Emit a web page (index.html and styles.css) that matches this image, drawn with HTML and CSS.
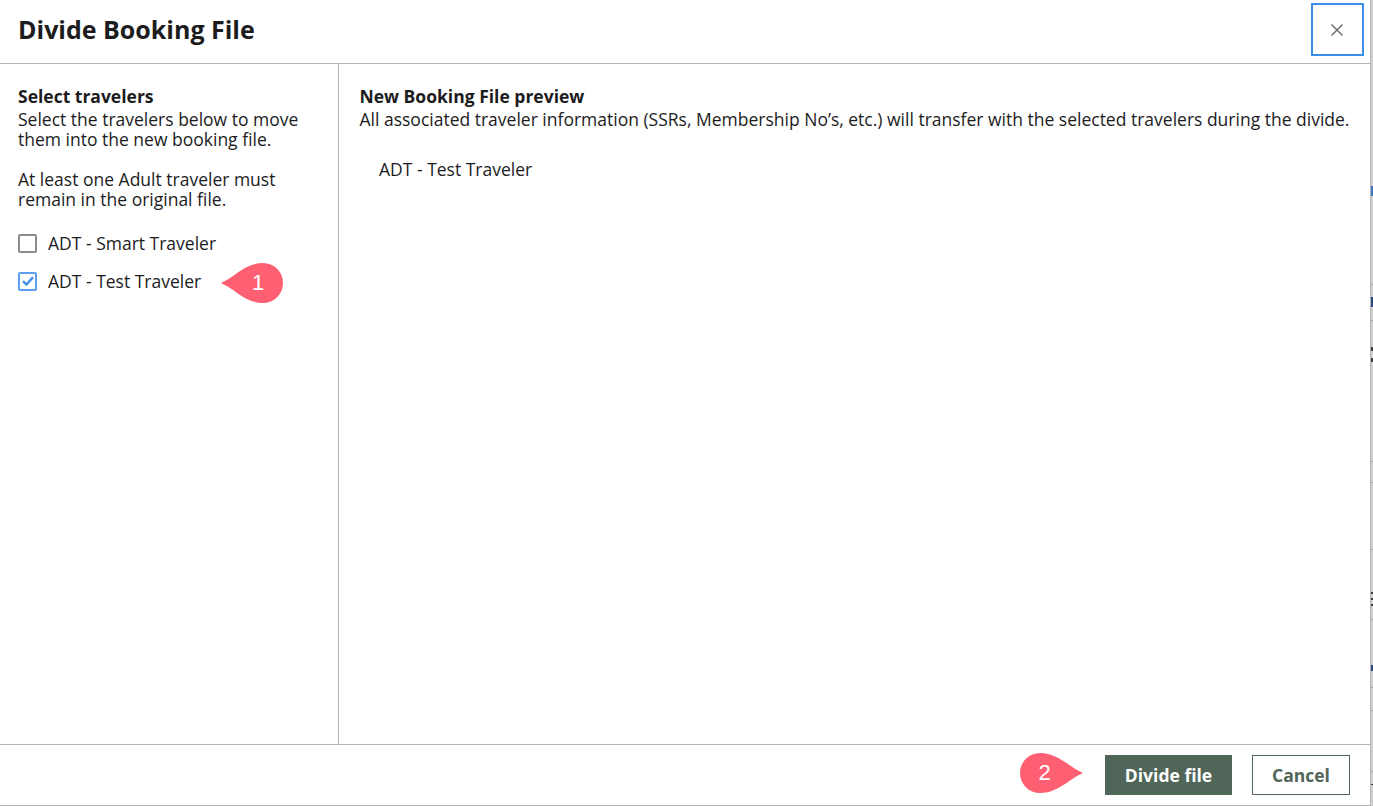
FILE: index.html
```html
<!DOCTYPE html>
<html lang="en">
<head>
<meta charset="utf-8">
<title>Divide Booking File</title>
<link rel="stylesheet" href="styles.css">
</head>
<body>
<div class="page">
  <main class="dialog">
    <header class="head">
      <h1 class="title">Divide Booking File</h1>
      <button class="close" aria-label="Close">
        <svg width="14" height="14" viewBox="0 0 14 14"><path d="M1.5 1.5 12.5 12.5M12.5 1.5 1.5 12.5" stroke="#6b6f76" stroke-width="1.5" fill="none"/></svg>
      </button>
    </header>
    <div class="body">
      <section class="left">
        <h2 class="sub">Select travelers</h2>
        <p class="text">Select the travelers below to move them into the new booking file.</p>
        <p class="text gap">At least one Adult traveler must remain in the original file.</p>
        <div class="options">
          <label class="option">
            <span class="box"></span>
            <span>ADT - Smart Traveler</span>
          </label>
          <label class="option">
            <span class="box on">
              <svg width="14" height="12" viewBox="0 0 14 12"><path d="M2 6.2 5.4 9.6 12 2.2" stroke="#3b8fe8" stroke-width="2.4" fill="none"/></svg>
            </span>
            <span>ADT - Test Traveler</span>
            <span class="pin pin-left">
              <svg class="drop" width="63" height="40" viewBox="0 0 63 40"><path d="M0 20C14 14 24 0 42 0A20 20 0 0 1 42 40C24 40 14 26 0 20Z" fill="#ff5f73"/></svg>
              <span class="num">1</span>
            </span>
          </label>
        </div>
      </section>
      <section class="right">
        <h2 class="sub">New Booking File preview</h2>
        <p class="text">All associated traveler information (SSRs, Membership No’s, etc.) will transfer with the selected travelers during the divide.</p>
        <p class="traveler">ADT - Test Traveler</p>
      </section>
    </div>
    <footer class="foot">
      <span class="pin pin-right">
        <svg class="drop" width="63" height="40" viewBox="0 0 63 40"><path d="M63 20C49 14 38 0 20 0A20 20 0 0 0 20 40C38 40 49 26 63 20Z" fill="#ff5f73"/></svg>
        <span class="num">2</span>
      </span>
      <button class="btn primary">Divide file</button>
      <button class="btn ghost">Cancel</button>
    </footer>
  </main>
  <aside class="strip">
    <i class="bit blue" style="top:186px;height:10px"></i>
    <i class="bit line" style="top:284px"></i>
    <i class="bit navy" style="top:297px;height:10px"></i>
    <i class="bit line" style="top:320px"></i>
    <i class="bit dark" style="top:347px;height:4px"></i>
    <i class="bit dark" style="top:358px;height:4px"></i>
    <i class="bit line" style="top:461px"></i>
    <i class="bit line" style="top:482px"></i>
    <i class="bit line" style="top:549px"></i>
    <i class="bit dark" style="top:592px;height:2px"></i>
    <i class="bit dark" style="top:598px;height:2px"></i>
    <i class="bit dark" style="top:604px;height:2px"></i>
    <i class="bit line" style="top:619px"></i>
    <i class="bit navy" style="top:665px;height:6px"></i>
    <i class="bit line" style="top:687px"></i>
    <i class="bit line" style="top:710px"></i>
    <i class="bit line" style="top:771px"></i>
    <i class="bit dark" style="top:784px"></i>
  </aside>
</div>
</body>
</html>
```
FILE: styles.css
```css
* { box-sizing: border-box; }
html, body { margin: 0; height: 100%; overflow: hidden; background: #fff; }
body { font-family: "Open Sans", sans-serif; font-size: 17.5px; line-height: 20px; color: #1c1c1e; }
.page { display: flex; width: 1373px; height: 806px; }
.dialog { width: 1370px; height: 806px; display: flex; flex-direction: column; border-bottom: 1px solid #b5b5b5; background: #fff; }
.strip { position: relative; flex: 1; background: #d0d0d0; border-left: 1px solid #b5b5b5; }
.bit { position: absolute; left: 0; right: 0; height: 1px; }
.line { background: #a8a8a8; }
.blue { background: #3f78c0; }
.navy { background: #2a4a80; }
.dark { background: #3a3d42; }
.head { height: 64px; flex: none; display: flex; align-items: flex-start; justify-content: space-between; padding: 3px 6px 0 18px; border-bottom: 1px solid #b5b5b5; }
.title { margin: 10px 0 0; font-size: 25px; line-height: 32px; font-weight: 700; color: #1c1c1e; }
.close { width: 53px; height: 53px; padding: 0 1px 0 0; display: flex; align-items: center; justify-content: center; background: #fff; border: 2px solid #3b8fe8; }
.body { flex: 1; display: flex; min-height: 0; }
.left { width: 339px; flex: none; padding: 22px 18px 0; border-right: 1px solid #b5b5b5; }
.right { flex: 1; padding: 22px 20px 0 20.5px; }
.sub { margin: 0 0 3px; font-size: 17.5px; line-height: 20px; font-weight: 700; }
.text { margin: 0; font-size: 17.5px; line-height: 20px; }
.gap { margin-top: 20px; }
.options { margin-top: 24px; display: flex; flex-direction: column; gap: 18px; }
.option { position: relative; display: flex; align-items: center; gap: 11px; height: 20px; }
.box { width: 19px; height: 19px; display: flex; align-items: center; justify-content: center; background: #fff; border: 2px solid #8c8c8c; border-radius: 2px; }
.box.on { border-color: #5aa0ec; }
.traveler { margin: 30px 0 0; padding-left: 19.5px; font-size: 17.5px; line-height: 20px; }
.foot { height: 61px; flex: none; position: relative; display: flex; align-items: center; justify-content: flex-end; gap: 20px; padding: 0 20px 0 0; border-top: 1px solid #b5b5b5; }
.btn { height: 40px; padding: 0; font-family: inherit; font-size: 17.5px; font-weight: 700; }
.primary { width: 127px; background: #4f6659; color: #fff; border: none; }
.ghost { width: 98px; background: #fff; color: #4f6659; border: 1px solid #4f6659; }
.pin { position: absolute; display: flex; align-items: center; justify-content: center; width: 63px; height: 40px; color: #fff; font-family: "Liberation Sans", sans-serif; font-size: 22px; }
.drop { position: absolute; left: 0; top: 0; }
.num { position: relative; }
.pin-left { left: 203px; top: -8px; padding-left: 11px; }
.pin-right { left: 1020px; top: 8px; padding-right: 14px; }
```
